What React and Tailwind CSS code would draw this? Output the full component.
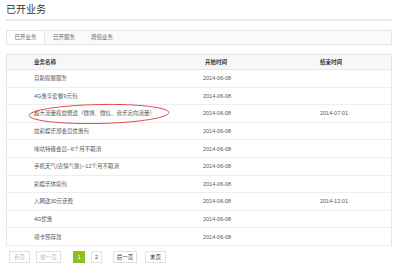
const rows = [
  { name: "自助提醒服务", start: "2014-06-08", end: "" },
  { name: "4G惠享套餐9元包", start: "2014-06-08", end: "" },
  { name: "超大流量权益赠送（微博、微信、音乐定向流量）", start: "2014-06-08", end: "2014-07-01", circled: true },
  { name: "炫彩娱乐部会员优惠包", start: "2014-06-08", end: "" },
  { name: "咪咕特级会员--6个月不取消", start: "2014-06-08", end: "" },
  { name: "手机天气(农情气象)--12个月不取消", start: "2014-06-08", end: "" },
  { name: "彩娱乐体验包", start: "2014-06-08", end: "" },
  { name: "入网送30元话费", start: "2014-06-08", end: "2014-12-01" },
  { name: "4G优惠", start: "2014-06-08", end: "" },
  { name: "领卡预存款", start: "2014-06-08", end: "" },
];

const tabs = ["已开业务", "已开服务", "增值业务"];

export default function App() {
  return (
    <div
      className="w-[400px] h-[263px] bg-white overflow-hidden pl-[6px] pr-[8px]"
      style={{ fontFamily: '"Liberation Sans", "Noto Sans CJK SC", sans-serif' }}
    >
      {/* title */}
      <div className="pt-[3px] h-[19px] text-[10px] leading-[13px] text-[#333]">已开业务</div>
      <div className="h-[2px] bg-[#e8e8e8]" />

      {/* tabs */}
      <div className="mt-[9px] h-[15px] flex border border-[#e6e6e6] bg-[#fafafa]">
        {tabs.map((t, i) => (
          <div
            key={t}
            className={`w-[38px] flex items-center justify-center text-[5.5px] text-[#666] ${
              i === 0 ? "bg-white border-r border-[#e6e6e6]" : ""
            }`}
          >
            {t}
          </div>
        ))}
      </div>

      {/* table */}
      <div className="mt-[9px] border-x border-t border-[#e6e6e6] text-[5.5px]">
        <div className="h-[15px] grid grid-cols-[190px_117px_1fr] items-center bg-[#f7f7f7] border-b border-[#e6e6e6] font-bold text-[#333]">
          <div className="pl-[27px]">业务名称</div>
          <div className="pl-[8px]">开始时间</div>
          <div className="pl-[6px]">结束时间</div>
        </div>
        {rows.map((r) => (
          <div
            key={r.name}
            className="relative h-[17.6px] grid grid-cols-[190px_117px_1fr] items-center border-b border-[#eeeeee] text-[#555]"
          >
            <div className="pl-[27px] whitespace-nowrap">{r.name}</div>
            <div className="pl-[6px]">{r.start}</div>
            <div className="pl-[6px]">{r.end}</div>
            {r.circled && (
              <svg
                className="absolute left-[19px] top-[-3px] pointer-events-none"
                width="146"
                height="24"
                viewBox="0 0 146 24"
              >
                <ellipse
                  cx="73"
                  cy="12"
                  rx="70"
                  ry="9.5"
                  fill="none"
                  stroke="#e23b3b"
                  strokeWidth="0.9"
                  transform="rotate(-1.2 73 12)"
                />
              </svg>
            )}
          </div>
        ))}
      </div>

      {/* pagination */}
      <div className="mt-[5px] flex items-center text-[5.5px]">
        <div className="ml-[3px] w-[21px] h-[12px] flex items-center justify-center border border-[#e0e0e0] text-[#bbb]">首页</div>
        <div className="ml-[6px] w-[25px] h-[12px] flex items-center justify-center border border-[#e0e0e0] text-[#bbb]">前一页</div>
        <div className="ml-[12px] w-[12px] h-[12px] flex items-center justify-center bg-[#8cbf1f] text-white">1</div>
        <div className="ml-[6px] w-[11px] h-[12px] flex items-center justify-center border border-[#e0e0e0] text-[#333]">2</div>
        <div className="ml-[11px] w-[24px] h-[12px] flex items-center justify-center border border-[#e0e0e0] text-[#333]">后一页</div>
        <div className="ml-[8px] w-[21px] h-[12px] flex items-center justify-center border border-[#e0e0e0] text-[#333]">末页</div>
      </div>
    </div>
  );
}
